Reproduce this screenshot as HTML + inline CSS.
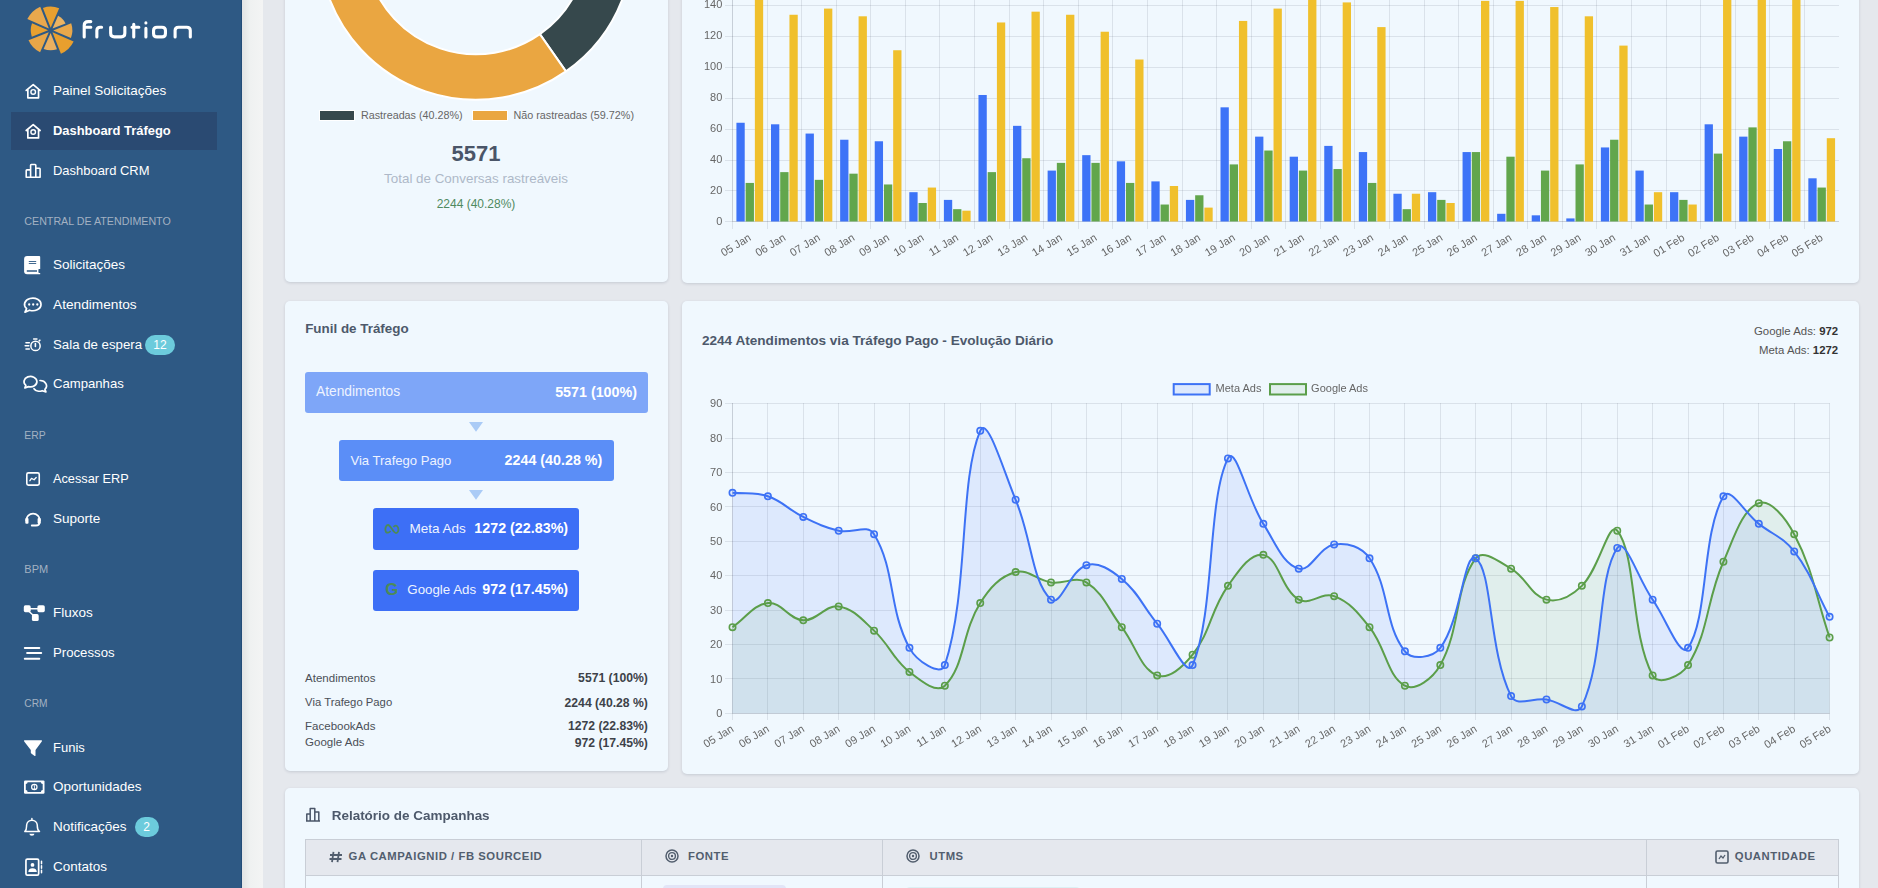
<!DOCTYPE html>
<html><head><meta charset="utf-8"><style>
html,body{margin:0;padding:0;width:1878px;height:888px;overflow:hidden;background:#e5e8ed;font-family:"Liberation Sans", sans-serif;}
</style></head><body>
<div style="position:absolute;left:0;top:0;width:242px;height:888px;background:#2e5984;"></div><div style="position:absolute;left:241px;top:0;width:1px;height:888px;background:#234c78;"></div><div style="position:absolute;left:242px;top:0;width:21px;height:888px;background:linear-gradient(90deg,#e2e4e5 0px,#e6e8e8 3px,#eff1f1 8px,#f3f4f4 20px);"></div><div style="position:absolute;left:11px;top:112px;width:206px;height:38px;background:#2a4a72;"></div><svg style="position:absolute;left:0;top:0" width="242" height="70"><path d="M50.70,27.75 L42.90,7.96 A23.7,23.7 0 0 1 59.17,8.25 Z" fill="#e8a030"/><path d="M52.53,28.54 L58.09,15.75 A16.4,16.4 0 0 1 65.51,23.43 Z" fill="#ebb362"/><path d="M53.26,30.41 L71.19,23.35 A21.7,21.7 0 0 1 70.93,38.09 Z" fill="#e9a84b"/><path d="M52.47,32.24 L73.62,41.44 A25.5,25.5 0 0 1 60.92,53.70 Z" fill="#e89f2e"/><path d="M50.60,32.97 L57.00,49.22 A19.9,19.9 0 0 1 43.64,48.99 Z" fill="#ebb060"/><path d="M48.77,32.18 L40.09,52.14 A24.2,24.2 0 0 1 28.52,40.15 Z" fill="#e8a648"/><path d="M48.04,30.31 L31.79,36.71 A19.9,19.9 0 0 1 32.02,23.35 Z" fill="#e8a030"/><path d="M48.83,28.48 L27.31,19.12 A25.9,25.9 0 0 1 40.23,6.65 Z" fill="#e9a84d"/><g fill="none" stroke="#fff" stroke-width="3.1" stroke-linecap="round" stroke-linejoin="round"><path d="M84.2,36.9 V25.6 Q84.2,21.6 88.2,21.6 H90.8 M84.2,27.2 H90.8"/><path d="M96.85,36.9 V30.6 Q96.85,27.2 100.2,27.2 H101.6"/><path d="M110.65,27.2 V33.3 Q110.65,36.9 114.3,36.9 H121.2 Q124.85,36.9 124.85,33.3 V27.2"/><path d="M133.75,24.2 V36.9 M132,27.2 H138.85"/><path d="M145.9,28.4 V36.9 M145.9,22.9 V23"/><path d="M157,27.2 H162 Q165.45,27.2 165.45,30.6 V33.5 Q165.45,36.9 162,36.9 H157 Q153.55,36.9 153.55,33.5 V30.6 Q153.55,27.2 157,27.2 Z"/><path d="M175.1,36.9 V30.6 Q175.1,27.2 178.6,27.2 H186.8 Q190.3,27.2 190.3,30.6 V36.9"/></g></svg><div style="position:absolute;left:53.00px;top:83.87px;font-size:13.5px;line-height:13.5px;color:#ffffff;font-weight:normal;white-space:nowrap;">Painel Solicitações</div><div style="position:absolute;left:53.00px;top:124.95px;font-size:12.93px;line-height:12.93px;color:#ffffff;font-weight:bold;white-space:nowrap;">Dashboard Tráfego</div><div style="position:absolute;left:53.00px;top:164.63px;font-size:12.96px;line-height:12.96px;color:#ffffff;font-weight:normal;white-space:nowrap;">Dashboard CRM</div><div style="position:absolute;left:53.00px;top:257.77px;font-size:13.5px;line-height:13.5px;color:#ffffff;font-weight:normal;white-space:nowrap;">Solicitações</div><div style="position:absolute;left:53.00px;top:297.80px;font-size:13.7px;line-height:13.7px;color:#ffffff;font-weight:normal;white-space:nowrap;">Atendimentos</div><div style="position:absolute;left:53.00px;top:338.28px;font-size:13.25px;line-height:13.25px;color:#ffffff;font-weight:normal;white-space:nowrap;">Sala de espera</div><div style="position:absolute;left:53.00px;top:376.99px;font-size:13.13px;line-height:13.13px;color:#ffffff;font-weight:normal;white-space:nowrap;">Campanhas</div><div style="position:absolute;left:53.00px;top:472.82px;font-size:12.74px;line-height:12.74px;color:#ffffff;font-weight:normal;white-space:nowrap;">Acessar ERP</div><div style="position:absolute;left:53.00px;top:511.77px;font-size:13.5px;line-height:13.5px;color:#ffffff;font-weight:normal;white-space:nowrap;">Suporte</div><div style="position:absolute;left:53.00px;top:606.17px;font-size:13.5px;line-height:13.5px;color:#ffffff;font-weight:normal;white-space:nowrap;">Fluxos</div><div style="position:absolute;left:53.00px;top:645.73px;font-size:13.2px;line-height:13.2px;color:#ffffff;font-weight:normal;white-space:nowrap;">Processos</div><div style="position:absolute;left:53.00px;top:741.20px;font-size:13.0px;line-height:13.0px;color:#ffffff;font-weight:normal;white-space:nowrap;">Funis</div><div style="position:absolute;left:53.00px;top:779.87px;font-size:13.5px;line-height:13.5px;color:#ffffff;font-weight:normal;white-space:nowrap;">Oportunidades</div><div style="position:absolute;left:53.00px;top:819.67px;font-size:13.5px;line-height:13.5px;color:#ffffff;font-weight:normal;white-space:nowrap;">Notificações</div><div style="position:absolute;left:53.00px;top:859.57px;font-size:13.5px;line-height:13.5px;color:#ffffff;font-weight:normal;white-space:nowrap;">Contatos</div><div style="position:absolute;left:24.30px;top:215.64px;font-size:10.7px;line-height:10.7px;color:#a3b1c2;font-weight:normal;white-space:nowrap;">CENTRAL DE ATENDIMENTO</div><div style="position:absolute;left:24.30px;top:430.60px;font-size:10.4px;line-height:10.4px;color:#a3b1c2;font-weight:normal;white-space:nowrap;">ERP</div><div style="position:absolute;left:24.30px;top:563.89px;font-size:11px;line-height:11px;color:#a3b1c2;font-weight:normal;white-space:nowrap;">BPM</div><div style="position:absolute;left:24.30px;top:699.07px;font-size:10.2px;line-height:10.2px;color:#a3b1c2;font-weight:normal;white-space:nowrap;">CRM</div><div style="position:absolute;left:145px;top:335px;width:30px;height:20px;border-radius:10.0px;background:#6ccbdc;color:#fff;font-size:12px;line-height:20px;text-align:center;">12</div><div style="position:absolute;left:134.5px;top:817px;width:24.0px;height:20px;border-radius:10.0px;background:#6ccbdc;color:#fff;font-size:12px;line-height:20px;text-align:center;">2</div><svg style="position:absolute;left:0;top:0" width="242" height="888"><g transform="translate(0,0)"><path d="M26.2,90.4 L33.2,84.6 L40.1,90.4 M27.85,89.2 V97.8 H38.55 V89.2" fill="none" stroke="#fff" stroke-linejoin="round" stroke-linecap="round" stroke-width="1.7"/><circle cx="33.2" cy="91.9" r="2.3" fill="none" stroke="#fff" stroke-linejoin="round" stroke-linecap="round" stroke-width="1.4"/></g><g transform="translate(0,40.1)"><path d="M26.2,90.4 L33.2,84.6 L40.1,90.4 M27.85,89.2 V97.8 H38.55 V89.2" fill="none" stroke="#fff" stroke-linejoin="round" stroke-linecap="round" stroke-width="1.7"/><circle cx="33.2" cy="91.9" r="2.3" fill="none" stroke="#fff" stroke-linejoin="round" stroke-linecap="round" stroke-width="1.4"/></g><path d="M26.2,177.2 V170.6 Q26.2,169.9 26.9,169.9 H30.6 V165.2 Q30.6,164.5 31.3,164.5 H35.1 Q35.8,164.5 35.8,165.2 V168.2 H39.4 Q40.1,168.2 40.1,168.9 V177.2 Z M30.6,169.9 V177.2 M35.8,168.2 V177.2" fill="none" stroke="#fff" stroke-linejoin="round" stroke-linecap="round" stroke-width="1.6"/><path d="M27.1,256.1 H39.2 Q40.2,256.1 40.2,257.1 V274.3 H27.1 Q24.1,274.3 24.1,271.3 V259.1 Q24.1,256.1 27.1,256.1 Z" fill="#fff"/><path d="M28.8,261.5 H36.2 M28.8,263.5 H36.2" stroke="#2e5984" stroke-width="0.9"/><path d="M26.8,271 H37 M38.6,269.8 H40.4 V272.1 H38.6" stroke="#2e5984" stroke-width="1.7" fill="#2e5984"/><path d="M26.6,308.6 A8.25,6.3 0 1 1 29.5,310.2 L25,312.2 Z" fill="none" stroke="#fff" stroke-linejoin="round" stroke-linecap="round" stroke-width="1.7"/><circle cx="29.2" cy="304.5" r="1.15" fill="#fff"/><circle cx="33.2" cy="304.5" r="1.15" fill="#fff"/><circle cx="37.3" cy="304.5" r="1.15" fill="#fff"/><circle cx="35.5" cy="345.9" r="4.65" fill="none" stroke="#fff" stroke-linejoin="round" stroke-linecap="round" stroke-width="1.5"/><path d="M33.7,339 H36.9 M39.2,340.9 L39.9,340.2 M35.4,343.6 V346.4 M26,342.7 H29.3 M25.2,345.8 H28.8 M26,349 H29.3" fill="none" stroke="#fff" stroke-linejoin="round" stroke-linecap="round" stroke-width="1.6"/><path d="M25.9,385.3 A6.45,5.2 0 1 1 28.6,386.6 L24.9,387.9 Z" fill="none" stroke="#fff" stroke-linejoin="round" stroke-linecap="round" stroke-width="1.7"/><path d="M40,380.5 A6.3,5.3 0 0 1 44.9,389.3 L45.9,391.9 L42.2,390.7 A6.3,5.3 0 0 1 34,388.7" fill="none" stroke="#fff" stroke-linejoin="round" stroke-linecap="round" stroke-width="1.7"/><rect x="26.8" y="472.9" width="12.45" height="12.2" rx="1.6" fill="none" stroke="#fff" stroke-linejoin="round" stroke-linecap="round" stroke-width="1.6"/><path d="M29.9,480.7 L31.5,478.4 L34.1,479.8 L36.2,477.5" fill="none" stroke="#fff" stroke-linejoin="round" stroke-linecap="round" stroke-width="1.3"/><path d="M26.2,520.5 A6.85,6.85 0 0 1 39.9,520.5" fill="none" stroke="#fff" stroke-linejoin="round" stroke-linecap="round" stroke-width="1.7"/><rect x="25.3" y="518" width="3.2" height="5.8" rx="1" fill="#fff"/><rect x="37.6" y="518" width="3.2" height="5.8" rx="1" fill="#fff"/><path d="M39.3,523 Q39.3,525.5 36,525.5 H31.8" fill="none" stroke="#fff" stroke-linejoin="round" stroke-linecap="round" stroke-width="1.9"/><rect x="23.8" y="605.3" width="6.9" height="6.9" rx="1.6" fill="#fff"/><rect x="37.4" y="605.3" width="7.4" height="6.9" rx="1.6" fill="#fff"/><rect x="31.9" y="614.1" width="6.8" height="6.9" rx="1.6" fill="#fff"/><path d="M30,608.7 H38 M28.5,611 L33.5,615.5" fill="none" stroke="#fff" stroke-linejoin="round" stroke-linecap="round" stroke-width="1.4"/><path d="M24.8,648 H39.3 M27.1,652.9 H41.2 M24.8,658.8 H39.3" fill="none" stroke="#fff" stroke-linejoin="round" stroke-linecap="round" stroke-width="2"/><path d="M24.6,740.3 H41.4 Q42.4,740.3 41.8,741.4 L35.5,750 V755.2 Q35.5,756.6 34.3,755.8 L31.3,753.6 Q30.8,753.2 30.8,752.6 V750 L24.2,741.4 Q23.6,740.3 24.6,740.3 Z" fill="#fff"/><rect x="24" y="780.4" width="20.5" height="13.3" rx="1.2" fill="#fff"/><path d="M27.6,782.2 H40.9 A1.8,1.8 0 0 0 42.7,784 V790.1 A1.8,1.8 0 0 0 40.9,791.9 H27.6 A1.8,1.8 0 0 0 25.8,790.1 V784 A1.8,1.8 0 0 0 27.6,782.2 Z" fill="#2e5984"/><circle cx="34.3" cy="787" r="3.3" fill="#fff"/><circle cx="34.3" cy="787" r="2.1" fill="#2e5984"/><path d="M33.6,785.9 L34.5,785.4 V788.5 M33.6,788.5 H35.3" fill="none" stroke="#fff" stroke-width="0.8"/><path d="M31.9,818.6 V819.8 M24.8,831.6 H39.5 Q37.3,830 37.3,826 V825 A5.4,5.6 0 0 0 26.6,825 V826 Q26.6,830 24.8,831.6 Z" fill="none" stroke="#fff" stroke-linejoin="round" stroke-linecap="round" stroke-width="1.5"/><path d="M29.4,833.8 H34.4 A2.5,2 0 0 1 29.4,833.8 Z" fill="#fff"/><rect x="25.95" y="859.05" width="12.7" height="16.1" rx="1.4" fill="none" stroke="#fff" stroke-linejoin="round" stroke-linecap="round" stroke-width="1.7"/><path d="M41.5,861.2 V863.8 M41.5,865.7 V868.3 M41.5,870.2 V872.8" fill="none" stroke="#fff" stroke-linejoin="round" stroke-linecap="round" stroke-width="1.5"/><circle cx="32.5" cy="864.9" r="1.9" fill="#fff"/><path d="M28.3,872 Q28.3,868.2 32.5,868.2 Q36.8,868.2 36.8,872 Z" fill="#fff"/></svg><div style="position:absolute;left:285px;top:-200px;width:383px;height:482px;background:#f0f8fe;border-radius:5px;box-shadow:0 1px 3px rgba(20,35,70,0.15);"></div><div style="position:absolute;left:682px;top:-200px;width:1177px;height:483px;background:#f0f8fe;border-radius:5px;box-shadow:0 1px 3px rgba(20,35,70,0.15);"></div><div style="position:absolute;left:285px;top:301px;width:383px;height:470px;background:#f0f8fe;border-radius:5px;box-shadow:0 1px 3px rgba(20,35,70,0.15);"></div><div style="position:absolute;left:682px;top:301px;width:1177px;height:473px;background:#f0f8fe;border-radius:5px;box-shadow:0 1px 3px rgba(20,35,70,0.15);"></div><div style="position:absolute;left:285px;top:788px;width:1574px;height:312px;background:#f0f8fe;border-radius:5px;box-shadow:0 1px 3px rgba(20,35,70,0.15);"></div><svg style="position:absolute;left:285px;top:0" width="383" height="130"><g transform="translate(-285,0)"><path d="M476.00,-213.90 A156.8,156.8 0 0 1 565.92,71.36 L539.88,34.16 A111.4,111.4 0 0 0 476.00,-168.50 Z" fill="#36484c" stroke="#fff" stroke-width="2"/><path d="M565.92,71.36 A156.8,156.8 0 1 1 476.00,-213.90 L476.00,-168.50 A111.4,111.4 0 1 0 539.88,34.16 Z" fill="#eaa641" stroke="#fff" stroke-width="2"/></g></svg><div style="position:absolute;left:320px;top:111px;width:34.4px;height:9.4px;background:#36484c;box-shadow:0 0 0 1px #fff"></div><div style="position:absolute;left:472.6px;top:111px;width:34.4px;height:9.4px;background:#eaa641;box-shadow:0 0 0 1px #fff"></div><div style="position:absolute;left:361.00px;top:109.90px;font-size:10.75px;line-height:10.75px;color:#666;font-weight:normal;white-space:nowrap;">Rastreadas (40.28%)</div><div style="position:absolute;left:513.40px;top:109.86px;font-size:10.8px;line-height:10.8px;color:#666;font-weight:normal;white-space:nowrap;">Não rastreadas (59.72%)</div><div style="position:absolute;left:176.00px;width:600px;text-align:center;top:142.88px;font-size:22px;line-height:22px;color:#4a5568;font-weight:bold;white-space:nowrap;">5571</div><div style="position:absolute;left:176.00px;width:600px;text-align:center;top:171.66px;font-size:13.4px;line-height:13.4px;color:#aeb8c8;font-weight:normal;white-space:nowrap;">Total de Conversas rastreáveis</div><div style="position:absolute;left:176.00px;width:600px;text-align:center;top:197.84px;font-size:12px;line-height:12px;color:#4f8a5f;font-weight:normal;white-space:nowrap;">2244 (40.28%)</div><svg style="position:absolute;left:0;top:0;overflow:visible;will-change:transform" width="1878" height="290" font-family="Liberation Sans"><line x1="725" y1="221.5" x2="1839" y2="221.5" stroke="rgba(0,10,30,0.09)" stroke-width="1"/><line x1="725" y1="190.5" x2="1839" y2="190.5" stroke="rgba(0,10,30,0.09)" stroke-width="1"/><line x1="725" y1="160.5" x2="1839" y2="160.5" stroke="rgba(0,10,30,0.09)" stroke-width="1"/><line x1="725" y1="129.5" x2="1839" y2="129.5" stroke="rgba(0,10,30,0.09)" stroke-width="1"/><line x1="725" y1="98.5" x2="1839" y2="98.5" stroke="rgba(0,10,30,0.09)" stroke-width="1"/><line x1="725" y1="67.5" x2="1839" y2="67.5" stroke="rgba(0,10,30,0.09)" stroke-width="1"/><line x1="725" y1="36.5" x2="1839" y2="36.5" stroke="rgba(0,10,30,0.09)" stroke-width="1"/><line x1="725" y1="5.5" x2="1839" y2="5.5" stroke="rgba(0,10,30,0.09)" stroke-width="1"/><line x1="732.5" y1="-10" x2="732.5" y2="229" stroke="rgba(0,10,30,0.09)" stroke-width="1"/><line x1="767.5" y1="-10" x2="767.5" y2="229" stroke="rgba(0,10,30,0.09)" stroke-width="1"/><line x1="801.5" y1="-10" x2="801.5" y2="229" stroke="rgba(0,10,30,0.09)" stroke-width="1"/><line x1="836.5" y1="-10" x2="836.5" y2="229" stroke="rgba(0,10,30,0.09)" stroke-width="1"/><line x1="870.5" y1="-10" x2="870.5" y2="229" stroke="rgba(0,10,30,0.09)" stroke-width="1"/><line x1="905.5" y1="-10" x2="905.5" y2="229" stroke="rgba(0,10,30,0.09)" stroke-width="1"/><line x1="939.5" y1="-10" x2="939.5" y2="229" stroke="rgba(0,10,30,0.09)" stroke-width="1"/><line x1="974.5" y1="-10" x2="974.5" y2="229" stroke="rgba(0,10,30,0.09)" stroke-width="1"/><line x1="1009.5" y1="-10" x2="1009.5" y2="229" stroke="rgba(0,10,30,0.09)" stroke-width="1"/><line x1="1043.5" y1="-10" x2="1043.5" y2="229" stroke="rgba(0,10,30,0.09)" stroke-width="1"/><line x1="1078.5" y1="-10" x2="1078.5" y2="229" stroke="rgba(0,10,30,0.09)" stroke-width="1"/><line x1="1112.5" y1="-10" x2="1112.5" y2="229" stroke="rgba(0,10,30,0.09)" stroke-width="1"/><line x1="1147.5" y1="-10" x2="1147.5" y2="229" stroke="rgba(0,10,30,0.09)" stroke-width="1"/><line x1="1182.5" y1="-10" x2="1182.5" y2="229" stroke="rgba(0,10,30,0.09)" stroke-width="1"/><line x1="1216.5" y1="-10" x2="1216.5" y2="229" stroke="rgba(0,10,30,0.09)" stroke-width="1"/><line x1="1251.5" y1="-10" x2="1251.5" y2="229" stroke="rgba(0,10,30,0.09)" stroke-width="1"/><line x1="1285.5" y1="-10" x2="1285.5" y2="229" stroke="rgba(0,10,30,0.09)" stroke-width="1"/><line x1="1320.5" y1="-10" x2="1320.5" y2="229" stroke="rgba(0,10,30,0.09)" stroke-width="1"/><line x1="1354.5" y1="-10" x2="1354.5" y2="229" stroke="rgba(0,10,30,0.09)" stroke-width="1"/><line x1="1389.5" y1="-10" x2="1389.5" y2="229" stroke="rgba(0,10,30,0.09)" stroke-width="1"/><line x1="1424.5" y1="-10" x2="1424.5" y2="229" stroke="rgba(0,10,30,0.09)" stroke-width="1"/><line x1="1458.5" y1="-10" x2="1458.5" y2="229" stroke="rgba(0,10,30,0.09)" stroke-width="1"/><line x1="1493.5" y1="-10" x2="1493.5" y2="229" stroke="rgba(0,10,30,0.09)" stroke-width="1"/><line x1="1527.5" y1="-10" x2="1527.5" y2="229" stroke="rgba(0,10,30,0.09)" stroke-width="1"/><line x1="1562.5" y1="-10" x2="1562.5" y2="229" stroke="rgba(0,10,30,0.09)" stroke-width="1"/><line x1="1596.5" y1="-10" x2="1596.5" y2="229" stroke="rgba(0,10,30,0.09)" stroke-width="1"/><line x1="1631.5" y1="-10" x2="1631.5" y2="229" stroke="rgba(0,10,30,0.09)" stroke-width="1"/><line x1="1666.5" y1="-10" x2="1666.5" y2="229" stroke="rgba(0,10,30,0.09)" stroke-width="1"/><line x1="1700.5" y1="-10" x2="1700.5" y2="229" stroke="rgba(0,10,30,0.09)" stroke-width="1"/><line x1="1735.5" y1="-10" x2="1735.5" y2="229" stroke="rgba(0,10,30,0.09)" stroke-width="1"/><line x1="1769.5" y1="-10" x2="1769.5" y2="229" stroke="rgba(0,10,30,0.09)" stroke-width="1"/><line x1="1804.5" y1="-10" x2="1804.5" y2="229" stroke="rgba(0,10,30,0.09)" stroke-width="1"/><line x1="732.5" y1="-10" x2="732.5" y2="221.5" stroke="rgba(0,10,30,0.09)"/><line x1="732.5" y1="221.5" x2="1839" y2="221.5" stroke="rgba(0,10,30,0.09)"/><rect x="736.42" y="122.76" width="8.30" height="98.74" fill="#3d73f7"/><rect x="745.64" y="182.93" width="8.30" height="38.57" fill="#62a64c"/><rect x="754.86" y="-25.36" width="8.30" height="246.86" fill="#f0c02c"/><rect x="771.00" y="124.30" width="8.30" height="97.20" fill="#3d73f7"/><rect x="780.22" y="172.13" width="8.30" height="49.37" fill="#62a64c"/><rect x="789.44" y="14.76" width="8.30" height="206.74" fill="#f0c02c"/><rect x="805.58" y="133.56" width="8.30" height="87.94" fill="#3d73f7"/><rect x="814.80" y="179.84" width="8.30" height="41.66" fill="#62a64c"/><rect x="824.02" y="8.59" width="8.30" height="212.91" fill="#f0c02c"/><rect x="840.15" y="139.73" width="8.30" height="81.77" fill="#3d73f7"/><rect x="849.37" y="173.67" width="8.30" height="47.83" fill="#62a64c"/><rect x="858.59" y="16.30" width="8.30" height="205.20" fill="#f0c02c"/><rect x="874.73" y="141.27" width="8.30" height="80.23" fill="#3d73f7"/><rect x="883.95" y="184.47" width="8.30" height="37.03" fill="#62a64c"/><rect x="893.17" y="50.24" width="8.30" height="171.26" fill="#f0c02c"/><rect x="909.31" y="192.19" width="8.30" height="29.31" fill="#3d73f7"/><rect x="918.53" y="202.99" width="8.30" height="18.51" fill="#62a64c"/><rect x="927.75" y="187.56" width="8.30" height="33.94" fill="#f0c02c"/><rect x="943.89" y="199.90" width="8.30" height="21.60" fill="#3d73f7"/><rect x="953.11" y="209.16" width="8.30" height="12.34" fill="#62a64c"/><rect x="962.33" y="210.70" width="8.30" height="10.80" fill="#f0c02c"/><rect x="978.47" y="94.99" width="8.30" height="126.51" fill="#3d73f7"/><rect x="987.69" y="172.13" width="8.30" height="49.37" fill="#62a64c"/><rect x="996.91" y="22.47" width="8.30" height="199.03" fill="#f0c02c"/><rect x="1013.04" y="125.84" width="8.30" height="95.66" fill="#3d73f7"/><rect x="1022.26" y="158.24" width="8.30" height="63.26" fill="#62a64c"/><rect x="1031.49" y="11.67" width="8.30" height="209.83" fill="#f0c02c"/><rect x="1047.62" y="170.59" width="8.30" height="50.91" fill="#3d73f7"/><rect x="1056.84" y="162.87" width="8.30" height="58.63" fill="#62a64c"/><rect x="1066.06" y="14.76" width="8.30" height="206.74" fill="#f0c02c"/><rect x="1082.20" y="155.16" width="8.30" height="66.34" fill="#3d73f7"/><rect x="1091.42" y="162.87" width="8.30" height="58.63" fill="#62a64c"/><rect x="1100.64" y="31.73" width="8.30" height="189.77" fill="#f0c02c"/><rect x="1116.78" y="161.33" width="8.30" height="60.17" fill="#3d73f7"/><rect x="1126.00" y="182.93" width="8.30" height="38.57" fill="#62a64c"/><rect x="1135.22" y="59.50" width="8.30" height="162.00" fill="#f0c02c"/><rect x="1151.36" y="181.39" width="8.30" height="40.11" fill="#3d73f7"/><rect x="1160.58" y="204.53" width="8.30" height="16.97" fill="#62a64c"/><rect x="1169.80" y="186.01" width="8.30" height="35.49" fill="#f0c02c"/><rect x="1185.93" y="199.90" width="8.30" height="21.60" fill="#3d73f7"/><rect x="1195.16" y="195.27" width="8.30" height="26.23" fill="#62a64c"/><rect x="1204.38" y="207.61" width="8.30" height="13.89" fill="#f0c02c"/><rect x="1220.51" y="107.33" width="8.30" height="114.17" fill="#3d73f7"/><rect x="1229.73" y="164.41" width="8.30" height="57.09" fill="#62a64c"/><rect x="1238.95" y="20.93" width="8.30" height="200.57" fill="#f0c02c"/><rect x="1255.09" y="136.64" width="8.30" height="84.86" fill="#3d73f7"/><rect x="1264.31" y="150.53" width="8.30" height="70.97" fill="#62a64c"/><rect x="1273.53" y="8.59" width="8.30" height="212.91" fill="#f0c02c"/><rect x="1289.67" y="156.70" width="8.30" height="64.80" fill="#3d73f7"/><rect x="1298.89" y="170.59" width="8.30" height="50.91" fill="#62a64c"/><rect x="1308.11" y="-25.36" width="8.30" height="246.86" fill="#f0c02c"/><rect x="1324.25" y="145.90" width="8.30" height="75.60" fill="#3d73f7"/><rect x="1333.47" y="169.04" width="8.30" height="52.46" fill="#62a64c"/><rect x="1342.69" y="2.41" width="8.30" height="219.09" fill="#f0c02c"/><rect x="1358.83" y="152.07" width="8.30" height="69.43" fill="#3d73f7"/><rect x="1368.05" y="182.93" width="8.30" height="38.57" fill="#62a64c"/><rect x="1377.27" y="27.10" width="8.30" height="194.40" fill="#f0c02c"/><rect x="1393.40" y="193.73" width="8.30" height="27.77" fill="#3d73f7"/><rect x="1402.62" y="209.16" width="8.30" height="12.34" fill="#62a64c"/><rect x="1411.84" y="193.73" width="8.30" height="27.77" fill="#f0c02c"/><rect x="1427.98" y="192.19" width="8.30" height="29.31" fill="#3d73f7"/><rect x="1437.20" y="199.90" width="8.30" height="21.60" fill="#62a64c"/><rect x="1446.42" y="202.99" width="8.30" height="18.51" fill="#f0c02c"/><rect x="1462.56" y="152.07" width="8.30" height="69.43" fill="#3d73f7"/><rect x="1471.78" y="152.07" width="8.30" height="69.43" fill="#62a64c"/><rect x="1481.00" y="0.87" width="8.30" height="220.63" fill="#f0c02c"/><rect x="1497.14" y="213.79" width="8.30" height="7.71" fill="#3d73f7"/><rect x="1506.36" y="156.70" width="8.30" height="64.80" fill="#62a64c"/><rect x="1515.58" y="0.87" width="8.30" height="220.63" fill="#f0c02c"/><rect x="1531.72" y="215.33" width="8.30" height="6.17" fill="#3d73f7"/><rect x="1540.94" y="170.59" width="8.30" height="50.91" fill="#62a64c"/><rect x="1550.16" y="7.04" width="8.30" height="214.46" fill="#f0c02c"/><rect x="1566.29" y="218.41" width="8.30" height="3.09" fill="#3d73f7"/><rect x="1575.51" y="164.41" width="8.30" height="57.09" fill="#62a64c"/><rect x="1584.74" y="16.30" width="8.30" height="205.20" fill="#f0c02c"/><rect x="1600.87" y="147.44" width="8.30" height="74.06" fill="#3d73f7"/><rect x="1610.09" y="139.73" width="8.30" height="81.77" fill="#62a64c"/><rect x="1619.31" y="45.61" width="8.30" height="175.89" fill="#f0c02c"/><rect x="1635.45" y="170.59" width="8.30" height="50.91" fill="#3d73f7"/><rect x="1644.67" y="204.53" width="8.30" height="16.97" fill="#62a64c"/><rect x="1653.89" y="192.19" width="8.30" height="29.31" fill="#f0c02c"/><rect x="1670.03" y="192.19" width="8.30" height="29.31" fill="#3d73f7"/><rect x="1679.25" y="199.90" width="8.30" height="21.60" fill="#62a64c"/><rect x="1688.47" y="204.53" width="8.30" height="16.97" fill="#f0c02c"/><rect x="1704.61" y="124.30" width="8.30" height="97.20" fill="#3d73f7"/><rect x="1713.83" y="153.61" width="8.30" height="67.89" fill="#62a64c"/><rect x="1723.05" y="-25.36" width="8.30" height="246.86" fill="#f0c02c"/><rect x="1739.18" y="136.64" width="8.30" height="84.86" fill="#3d73f7"/><rect x="1748.41" y="127.39" width="8.30" height="94.11" fill="#62a64c"/><rect x="1757.63" y="-25.36" width="8.30" height="246.86" fill="#f0c02c"/><rect x="1773.76" y="148.99" width="8.30" height="72.51" fill="#3d73f7"/><rect x="1782.98" y="141.27" width="8.30" height="80.23" fill="#62a64c"/><rect x="1792.20" y="-25.36" width="8.30" height="246.86" fill="#f0c02c"/><rect x="1808.34" y="178.30" width="8.30" height="43.20" fill="#3d73f7"/><rect x="1817.56" y="187.56" width="8.30" height="33.94" fill="#62a64c"/><rect x="1826.78" y="138.19" width="8.30" height="83.31" fill="#f0c02c"/><text x="722.3" y="224.80" text-anchor="end" font-size="11" fill="#666">0</text><text x="722.3" y="193.82" text-anchor="end" font-size="11" fill="#666">20</text><text x="722.3" y="162.84" text-anchor="end" font-size="11" fill="#666">40</text><text x="722.3" y="131.86" text-anchor="end" font-size="11" fill="#666">60</text><text x="722.3" y="100.88" text-anchor="end" font-size="11" fill="#666">80</text><text x="722.3" y="69.90" text-anchor="end" font-size="11" fill="#666">100</text><text x="722.3" y="38.92" text-anchor="end" font-size="11" fill="#666">120</text><text x="722.3" y="7.94" text-anchor="end" font-size="11" fill="#666">140</text><text transform="translate(747.8,233) rotate(-31.5)" text-anchor="end" font-size="11" fill="#666" dy="0.7em">05 Jan</text><text transform="translate(782.4,233) rotate(-31.5)" text-anchor="end" font-size="11" fill="#666" dy="0.7em">06 Jan</text><text transform="translate(816.9,233) rotate(-31.5)" text-anchor="end" font-size="11" fill="#666" dy="0.7em">07 Jan</text><text transform="translate(851.5,233) rotate(-31.5)" text-anchor="end" font-size="11" fill="#666" dy="0.7em">08 Jan</text><text transform="translate(886.1,233) rotate(-31.5)" text-anchor="end" font-size="11" fill="#666" dy="0.7em">09 Jan</text><text transform="translate(920.7,233) rotate(-31.5)" text-anchor="end" font-size="11" fill="#666" dy="0.7em">10 Jan</text><text transform="translate(955.3,233) rotate(-31.5)" text-anchor="end" font-size="11" fill="#666" dy="0.7em">11 Jan</text><text transform="translate(989.8,233) rotate(-31.5)" text-anchor="end" font-size="11" fill="#666" dy="0.7em">12 Jan</text><text transform="translate(1024.4,233) rotate(-31.5)" text-anchor="end" font-size="11" fill="#666" dy="0.7em">13 Jan</text><text transform="translate(1059.0,233) rotate(-31.5)" text-anchor="end" font-size="11" fill="#666" dy="0.7em">14 Jan</text><text transform="translate(1093.6,233) rotate(-31.5)" text-anchor="end" font-size="11" fill="#666" dy="0.7em">15 Jan</text><text transform="translate(1128.1,233) rotate(-31.5)" text-anchor="end" font-size="11" fill="#666" dy="0.7em">16 Jan</text><text transform="translate(1162.7,233) rotate(-31.5)" text-anchor="end" font-size="11" fill="#666" dy="0.7em">17 Jan</text><text transform="translate(1197.3,233) rotate(-31.5)" text-anchor="end" font-size="11" fill="#666" dy="0.7em">18 Jan</text><text transform="translate(1231.9,233) rotate(-31.5)" text-anchor="end" font-size="11" fill="#666" dy="0.7em">19 Jan</text><text transform="translate(1266.5,233) rotate(-31.5)" text-anchor="end" font-size="11" fill="#666" dy="0.7em">20 Jan</text><text transform="translate(1301.0,233) rotate(-31.5)" text-anchor="end" font-size="11" fill="#666" dy="0.7em">21 Jan</text><text transform="translate(1335.6,233) rotate(-31.5)" text-anchor="end" font-size="11" fill="#666" dy="0.7em">22 Jan</text><text transform="translate(1370.2,233) rotate(-31.5)" text-anchor="end" font-size="11" fill="#666" dy="0.7em">23 Jan</text><text transform="translate(1404.8,233) rotate(-31.5)" text-anchor="end" font-size="11" fill="#666" dy="0.7em">24 Jan</text><text transform="translate(1439.4,233) rotate(-31.5)" text-anchor="end" font-size="11" fill="#666" dy="0.7em">25 Jan</text><text transform="translate(1473.9,233) rotate(-31.5)" text-anchor="end" font-size="11" fill="#666" dy="0.7em">26 Jan</text><text transform="translate(1508.5,233) rotate(-31.5)" text-anchor="end" font-size="11" fill="#666" dy="0.7em">27 Jan</text><text transform="translate(1543.1,233) rotate(-31.5)" text-anchor="end" font-size="11" fill="#666" dy="0.7em">28 Jan</text><text transform="translate(1577.7,233) rotate(-31.5)" text-anchor="end" font-size="11" fill="#666" dy="0.7em">29 Jan</text><text transform="translate(1612.2,233) rotate(-31.5)" text-anchor="end" font-size="11" fill="#666" dy="0.7em">30 Jan</text><text transform="translate(1646.8,233) rotate(-31.5)" text-anchor="end" font-size="11" fill="#666" dy="0.7em">31 Jan</text><text transform="translate(1681.4,233) rotate(-31.5)" text-anchor="end" font-size="11" fill="#666" dy="0.7em">01 Feb</text><text transform="translate(1716.0,233) rotate(-31.5)" text-anchor="end" font-size="11" fill="#666" dy="0.7em">02 Feb</text><text transform="translate(1750.6,233) rotate(-31.5)" text-anchor="end" font-size="11" fill="#666" dy="0.7em">03 Feb</text><text transform="translate(1785.1,233) rotate(-31.5)" text-anchor="end" font-size="11" fill="#666" dy="0.7em">04 Feb</text><text transform="translate(1819.7,233) rotate(-31.5)" text-anchor="end" font-size="11" fill="#666" dy="0.7em">05 Feb</text></svg><div style="position:absolute;left:305.20px;top:321.66px;font-size:13.4px;line-height:13.4px;color:#4d596b;font-weight:bold;white-space:nowrap;">Funil de Tráfego</div><div style="position:absolute;left:305px;top:372px;width:343px;height:41px;background:#7ea6f8;border-radius:3px;"></div><div style="position:absolute;left:339px;top:440px;width:275px;height:41px;background:#5b8ef7;border-radius:3px;"></div><div style="position:absolute;left:373px;top:508px;width:206px;height:42px;background:#3d6ff6;border-radius:3px;"></div><div style="position:absolute;left:373px;top:570px;width:206px;height:41px;background:#3d6ff6;border-radius:3px;"></div><svg style="position:absolute;left:469px;top:422px" width="14" height="10"><path d="M0,0 H14 L7,9.7 Z" fill="#aacbf6"/></svg><svg style="position:absolute;left:469px;top:490px" width="14" height="10"><path d="M0,0 H14 L7,9.7 Z" fill="#aacbf6"/></svg><div style="position:absolute;left:316.00px;top:385.36px;font-size:13.75px;line-height:13.75px;color:#eef3ff;font-weight:normal;white-space:nowrap;">Atendimentos</div><div style="position:absolute;right:1241.00px;top:384.90px;font-size:14.3px;line-height:14.3px;color:#ffffff;font-weight:bold;white-space:nowrap;">5571 (100%)</div><div style="position:absolute;left:350.40px;top:453.91px;font-size:13.1px;line-height:13.1px;color:#eef3ff;font-weight:normal;white-space:nowrap;">Via Trafego Pago</div><div style="position:absolute;right:1275.70px;top:452.90px;font-size:14.3px;line-height:14.3px;color:#ffffff;font-weight:bold;white-space:nowrap;">2244 (40.28 %)</div><div style="position:absolute;left:409.50px;top:521.57px;font-size:13.5px;line-height:13.5px;color:#eef3ff;font-weight:normal;white-space:nowrap;">Meta Ads</div><div style="position:absolute;right:1309.90px;top:520.90px;font-size:14.3px;line-height:14.3px;color:#ffffff;font-weight:bold;white-space:nowrap;">1272 (22.83%)</div><div style="position:absolute;left:407.30px;top:583.24px;font-size:13.3px;line-height:13.3px;color:#eef3ff;font-weight:normal;white-space:nowrap;">Google Ads</div><div style="position:absolute;right:1309.90px;top:582.40px;font-size:14.3px;line-height:14.3px;color:#ffffff;font-weight:bold;white-space:nowrap;">972 (17.45%)</div><svg style="position:absolute;left:384px;top:523px" width="16" height="12"><path d="M2,9 C0.5,6 2,2 4,2 C6.5,2 9.5,10 12,10 C14,10 15,7 14,4.5 C13,2 11,2 9.5,4 M6.5,8 C5,10 3,10 2,9" fill="none" stroke="#4c8a58" stroke-width="1.8"/></svg><div style="position:absolute;left:385.3px;top:581.9px;font-size:16.8px;line-height:16px;font-weight:bold;color:#4c8a58;">G</div><div style="position:absolute;left:305.10px;top:672.97px;font-size:11.5px;line-height:11.5px;color:#4a4f57;font-weight:normal;white-space:nowrap;">Atendimentos</div><div style="position:absolute;right:1230.10px;top:672.37px;font-size:12.2px;line-height:12.2px;color:#3d4249;font-weight:bold;white-space:nowrap;">5571 (100%)</div><div style="position:absolute;left:305.10px;top:697.33px;font-size:11.3px;line-height:11.3px;color:#4a4f57;font-weight:normal;white-space:nowrap;">Via Trafego Pago</div><div style="position:absolute;right:1230.10px;top:696.57px;font-size:12.2px;line-height:12.2px;color:#3d4249;font-weight:bold;white-space:nowrap;">2244 (40.28 %)</div><div style="position:absolute;left:305.10px;top:720.77px;font-size:11.5px;line-height:11.5px;color:#4a4f57;font-weight:normal;white-space:nowrap;">FacebookAds</div><div style="position:absolute;right:1230.10px;top:720.17px;font-size:12.2px;line-height:12.2px;color:#3d4249;font-weight:bold;white-space:nowrap;">1272 (22.83%)</div><div style="position:absolute;left:305.10px;top:737.17px;font-size:11.5px;line-height:11.5px;color:#4a4f57;font-weight:normal;white-space:nowrap;">Google Ads</div><div style="position:absolute;right:1230.10px;top:736.57px;font-size:12.2px;line-height:12.2px;color:#3d4249;font-weight:bold;white-space:nowrap;">972 (17.45%)</div><div style="position:absolute;left:701.90px;top:333.79px;font-size:13.6px;line-height:13.6px;color:#4d596b;font-weight:bold;white-space:nowrap;">2244 Atendimentos via Tráfego Pago - Evolução Diário</div><div style="position:absolute;right:39.80px;top:325.55px;font-size:11.4px;line-height:11.4px;color:#555;font-weight:normal;white-space:nowrap;">Google Ads: <b style="color:#333">972</b></div><div style="position:absolute;right:39.80px;top:345.45px;font-size:11.4px;line-height:11.4px;color:#555;font-weight:normal;white-space:nowrap;">Meta Ads: <b style="color:#333">1272</b></div><svg style="position:absolute;left:0;top:0;overflow:visible;will-change:transform" width="1878" height="888" font-family="Liberation Sans"><line x1="725" y1="713.5" x2="1829.6" y2="713.5" stroke="rgba(0,10,30,0.09)"/><line x1="725" y1="678.5" x2="1829.6" y2="678.5" stroke="rgba(0,10,30,0.09)"/><line x1="725" y1="644.5" x2="1829.6" y2="644.5" stroke="rgba(0,10,30,0.09)"/><line x1="725" y1="610.5" x2="1829.6" y2="610.5" stroke="rgba(0,10,30,0.09)"/><line x1="725" y1="575.5" x2="1829.6" y2="575.5" stroke="rgba(0,10,30,0.09)"/><line x1="725" y1="541.5" x2="1829.6" y2="541.5" stroke="rgba(0,10,30,0.09)"/><line x1="725" y1="506.5" x2="1829.6" y2="506.5" stroke="rgba(0,10,30,0.09)"/><line x1="725" y1="472.5" x2="1829.6" y2="472.5" stroke="rgba(0,10,30,0.09)"/><line x1="725" y1="438.5" x2="1829.6" y2="438.5" stroke="rgba(0,10,30,0.09)"/><line x1="725" y1="403.5" x2="1829.6" y2="403.5" stroke="rgba(0,10,30,0.09)"/><line x1="732.5" y1="403" x2="732.5" y2="720" stroke="rgba(0,10,30,0.09)"/><line x1="767.5" y1="403" x2="767.5" y2="720" stroke="rgba(0,10,30,0.09)"/><line x1="803.5" y1="403" x2="803.5" y2="720" stroke="rgba(0,10,30,0.09)"/><line x1="838.5" y1="403" x2="838.5" y2="720" stroke="rgba(0,10,30,0.09)"/><line x1="874.5" y1="403" x2="874.5" y2="720" stroke="rgba(0,10,30,0.09)"/><line x1="909.5" y1="403" x2="909.5" y2="720" stroke="rgba(0,10,30,0.09)"/><line x1="944.5" y1="403" x2="944.5" y2="720" stroke="rgba(0,10,30,0.09)"/><line x1="980.5" y1="403" x2="980.5" y2="720" stroke="rgba(0,10,30,0.09)"/><line x1="1015.5" y1="403" x2="1015.5" y2="720" stroke="rgba(0,10,30,0.09)"/><line x1="1051.5" y1="403" x2="1051.5" y2="720" stroke="rgba(0,10,30,0.09)"/><line x1="1086.5" y1="403" x2="1086.5" y2="720" stroke="rgba(0,10,30,0.09)"/><line x1="1121.5" y1="403" x2="1121.5" y2="720" stroke="rgba(0,10,30,0.09)"/><line x1="1157.5" y1="403" x2="1157.5" y2="720" stroke="rgba(0,10,30,0.09)"/><line x1="1192.5" y1="403" x2="1192.5" y2="720" stroke="rgba(0,10,30,0.09)"/><line x1="1227.5" y1="403" x2="1227.5" y2="720" stroke="rgba(0,10,30,0.09)"/><line x1="1263.5" y1="403" x2="1263.5" y2="720" stroke="rgba(0,10,30,0.09)"/><line x1="1298.5" y1="403" x2="1298.5" y2="720" stroke="rgba(0,10,30,0.09)"/><line x1="1334.5" y1="403" x2="1334.5" y2="720" stroke="rgba(0,10,30,0.09)"/><line x1="1369.5" y1="403" x2="1369.5" y2="720" stroke="rgba(0,10,30,0.09)"/><line x1="1404.5" y1="403" x2="1404.5" y2="720" stroke="rgba(0,10,30,0.09)"/><line x1="1440.5" y1="403" x2="1440.5" y2="720" stroke="rgba(0,10,30,0.09)"/><line x1="1475.5" y1="403" x2="1475.5" y2="720" stroke="rgba(0,10,30,0.09)"/><line x1="1511.5" y1="403" x2="1511.5" y2="720" stroke="rgba(0,10,30,0.09)"/><line x1="1546.5" y1="403" x2="1546.5" y2="720" stroke="rgba(0,10,30,0.09)"/><line x1="1581.5" y1="403" x2="1581.5" y2="720" stroke="rgba(0,10,30,0.09)"/><line x1="1617.5" y1="403" x2="1617.5" y2="720" stroke="rgba(0,10,30,0.09)"/><line x1="1652.5" y1="403" x2="1652.5" y2="720" stroke="rgba(0,10,30,0.09)"/><line x1="1688.5" y1="403" x2="1688.5" y2="720" stroke="rgba(0,10,30,0.09)"/><line x1="1723.5" y1="403" x2="1723.5" y2="720" stroke="rgba(0,10,30,0.09)"/><line x1="1758.5" y1="403" x2="1758.5" y2="720" stroke="rgba(0,10,30,0.09)"/><line x1="1794.5" y1="403" x2="1794.5" y2="720" stroke="rgba(0,10,30,0.09)"/><line x1="1829.5" y1="403" x2="1829.5" y2="720" stroke="rgba(0,10,30,0.09)"/><line x1="732.5" y1="403" x2="732.5" y2="713.5" stroke="rgba(0,10,30,0.09)"/><line x1="732.5" y1="713.5" x2="1829.6" y2="713.5" stroke="rgba(0,10,30,0.09)"/><path d="M732.50,627.19 C746.66,617.54 753.14,604.51 767.89,603.08 C781.45,601.76 788.87,619.60 803.28,620.30 C817.18,620.98 825.36,604.58 838.67,606.52 C853.67,608.71 861.59,619.10 874.06,630.63 C889.90,645.28 892.78,658.98 909.45,671.97 C921.09,681.03 936.43,693.93 944.84,685.74 C964.75,666.37 961.64,632.93 980.23,603.08 C989.95,587.46 999.75,576.71 1015.62,572.08 C1028.06,568.45 1036.56,580.30 1051.01,582.41 C1064.88,584.44 1075.56,575.56 1086.40,582.41 C1103.88,593.47 1107.97,609.02 1121.79,627.19 C1136.28,646.22 1140.38,668.87 1157.18,675.41 C1168.69,679.89 1182.77,667.14 1192.57,654.74 C1211.08,631.32 1210.35,610.71 1227.96,585.86 C1238.66,570.76 1250.56,552.37 1263.35,554.86 C1278.87,557.88 1281.30,589.45 1298.74,599.63 C1309.61,605.98 1321.94,591.44 1334.13,596.19 C1350.26,602.47 1357.98,612.59 1369.52,627.19 C1386.30,648.42 1387.20,676.27 1404.91,685.74 C1415.52,691.42 1432.74,678.69 1440.30,665.08 C1461.05,627.71 1454.37,587.36 1475.69,558.30 C1482.68,548.78 1498.64,561.37 1511.08,568.63 C1526.95,577.90 1530.80,595.82 1546.47,599.63 C1559.12,602.71 1571.47,595.97 1581.86,585.86 C1599.78,568.41 1608.60,519.80 1617.25,530.74 C1636.91,555.63 1629.95,632.34 1652.64,675.41 C1658.26,686.07 1680.89,676.55 1688.03,665.08 C1709.20,631.08 1706.01,601.56 1723.42,561.74 C1734.32,536.80 1742.03,509.72 1758.81,503.19 C1770.35,498.70 1785.68,518.01 1794.20,534.19 C1813.99,571.75 1815.43,596.19 1829.59,637.52 L1829.59,713.3 L732.50,713.3 Z" fill="rgba(91,158,74,0.1)"/><path d="M732.50,492.86 C746.66,494.23 754.74,491.82 767.89,496.30 C783.05,501.46 788.59,509.82 803.28,516.97 C816.90,523.59 824.05,527.19 838.67,530.74 C852.36,534.08 867.55,523.42 874.06,534.19 C895.86,570.26 888.17,608.51 909.45,647.86 C916.48,660.86 940.81,677.44 944.84,665.08 C969.12,590.64 958.89,480.69 980.23,430.86 C987.21,414.56 1003.67,471.24 1015.62,499.74 C1031.98,538.75 1031.70,581.78 1051.01,599.63 C1060.01,607.95 1070.40,569.86 1086.40,565.19 C1098.71,561.60 1110.48,569.61 1121.79,578.97 C1138.79,593.03 1142.69,606.11 1157.18,623.74 C1171.00,640.56 1186.74,678.70 1192.57,665.08 C1215.05,612.57 1207.06,500.11 1227.96,458.41 C1235.38,443.62 1247.33,498.91 1263.35,523.86 C1275.64,542.99 1282.56,563.91 1298.74,568.63 C1310.88,572.18 1319.13,546.71 1334.13,544.52 C1347.44,542.58 1361.70,546.50 1369.52,558.30 C1390.01,589.21 1384.05,624.91 1404.91,651.30 C1412.36,660.73 1432.66,657.89 1440.30,647.86 C1460.98,620.69 1464.26,550.51 1475.69,558.30 C1492.57,569.80 1488.43,650.89 1511.08,696.08 C1516.74,707.37 1532.41,697.47 1546.47,699.52 C1560.72,701.60 1576.72,717.43 1581.86,706.41 C1605.03,656.81 1596.82,578.79 1617.25,547.97 C1625.13,536.08 1638.16,579.20 1652.64,599.63 C1666.47,619.15 1680.17,659.33 1688.03,647.86 C1708.48,618.00 1701.44,534.80 1723.42,496.30 C1729.75,485.20 1744.65,512.83 1758.81,523.86 C1772.97,534.88 1783.55,537.42 1794.20,551.41 C1811.86,574.62 1815.43,590.68 1829.59,616.86 L1829.59,713.3 L732.50,713.3 Z" fill="rgba(59,110,245,0.1)"/><path d="M732.50,627.19 C746.66,617.54 753.14,604.51 767.89,603.08 C781.45,601.76 788.87,619.60 803.28,620.30 C817.18,620.98 825.36,604.58 838.67,606.52 C853.67,608.71 861.59,619.10 874.06,630.63 C889.90,645.28 892.78,658.98 909.45,671.97 C921.09,681.03 936.43,693.93 944.84,685.74 C964.75,666.37 961.64,632.93 980.23,603.08 C989.95,587.46 999.75,576.71 1015.62,572.08 C1028.06,568.45 1036.56,580.30 1051.01,582.41 C1064.88,584.44 1075.56,575.56 1086.40,582.41 C1103.88,593.47 1107.97,609.02 1121.79,627.19 C1136.28,646.22 1140.38,668.87 1157.18,675.41 C1168.69,679.89 1182.77,667.14 1192.57,654.74 C1211.08,631.32 1210.35,610.71 1227.96,585.86 C1238.66,570.76 1250.56,552.37 1263.35,554.86 C1278.87,557.88 1281.30,589.45 1298.74,599.63 C1309.61,605.98 1321.94,591.44 1334.13,596.19 C1350.26,602.47 1357.98,612.59 1369.52,627.19 C1386.30,648.42 1387.20,676.27 1404.91,685.74 C1415.52,691.42 1432.74,678.69 1440.30,665.08 C1461.05,627.71 1454.37,587.36 1475.69,558.30 C1482.68,548.78 1498.64,561.37 1511.08,568.63 C1526.95,577.90 1530.80,595.82 1546.47,599.63 C1559.12,602.71 1571.47,595.97 1581.86,585.86 C1599.78,568.41 1608.60,519.80 1617.25,530.74 C1636.91,555.63 1629.95,632.34 1652.64,675.41 C1658.26,686.07 1680.89,676.55 1688.03,665.08 C1709.20,631.08 1706.01,601.56 1723.42,561.74 C1734.32,536.80 1742.03,509.72 1758.81,503.19 C1770.35,498.70 1785.68,518.01 1794.20,534.19 C1813.99,571.75 1815.43,596.19 1829.59,637.52" fill="none" stroke="#5b9e4a" stroke-width="2"/><circle cx="732.50" cy="627.19" r="3.2" fill="rgba(91,158,74,0.1)" stroke="#5b9e4a" stroke-width="1.6"/><circle cx="767.89" cy="603.08" r="3.2" fill="rgba(91,158,74,0.1)" stroke="#5b9e4a" stroke-width="1.6"/><circle cx="803.28" cy="620.30" r="3.2" fill="rgba(91,158,74,0.1)" stroke="#5b9e4a" stroke-width="1.6"/><circle cx="838.67" cy="606.52" r="3.2" fill="rgba(91,158,74,0.1)" stroke="#5b9e4a" stroke-width="1.6"/><circle cx="874.06" cy="630.63" r="3.2" fill="rgba(91,158,74,0.1)" stroke="#5b9e4a" stroke-width="1.6"/><circle cx="909.45" cy="671.97" r="3.2" fill="rgba(91,158,74,0.1)" stroke="#5b9e4a" stroke-width="1.6"/><circle cx="944.84" cy="685.74" r="3.2" fill="rgba(91,158,74,0.1)" stroke="#5b9e4a" stroke-width="1.6"/><circle cx="980.23" cy="603.08" r="3.2" fill="rgba(91,158,74,0.1)" stroke="#5b9e4a" stroke-width="1.6"/><circle cx="1015.62" cy="572.08" r="3.2" fill="rgba(91,158,74,0.1)" stroke="#5b9e4a" stroke-width="1.6"/><circle cx="1051.01" cy="582.41" r="3.2" fill="rgba(91,158,74,0.1)" stroke="#5b9e4a" stroke-width="1.6"/><circle cx="1086.40" cy="582.41" r="3.2" fill="rgba(91,158,74,0.1)" stroke="#5b9e4a" stroke-width="1.6"/><circle cx="1121.79" cy="627.19" r="3.2" fill="rgba(91,158,74,0.1)" stroke="#5b9e4a" stroke-width="1.6"/><circle cx="1157.18" cy="675.41" r="3.2" fill="rgba(91,158,74,0.1)" stroke="#5b9e4a" stroke-width="1.6"/><circle cx="1192.57" cy="654.74" r="3.2" fill="rgba(91,158,74,0.1)" stroke="#5b9e4a" stroke-width="1.6"/><circle cx="1227.96" cy="585.86" r="3.2" fill="rgba(91,158,74,0.1)" stroke="#5b9e4a" stroke-width="1.6"/><circle cx="1263.35" cy="554.86" r="3.2" fill="rgba(91,158,74,0.1)" stroke="#5b9e4a" stroke-width="1.6"/><circle cx="1298.74" cy="599.63" r="3.2" fill="rgba(91,158,74,0.1)" stroke="#5b9e4a" stroke-width="1.6"/><circle cx="1334.13" cy="596.19" r="3.2" fill="rgba(91,158,74,0.1)" stroke="#5b9e4a" stroke-width="1.6"/><circle cx="1369.52" cy="627.19" r="3.2" fill="rgba(91,158,74,0.1)" stroke="#5b9e4a" stroke-width="1.6"/><circle cx="1404.91" cy="685.74" r="3.2" fill="rgba(91,158,74,0.1)" stroke="#5b9e4a" stroke-width="1.6"/><circle cx="1440.30" cy="665.08" r="3.2" fill="rgba(91,158,74,0.1)" stroke="#5b9e4a" stroke-width="1.6"/><circle cx="1475.69" cy="558.30" r="3.2" fill="rgba(91,158,74,0.1)" stroke="#5b9e4a" stroke-width="1.6"/><circle cx="1511.08" cy="568.63" r="3.2" fill="rgba(91,158,74,0.1)" stroke="#5b9e4a" stroke-width="1.6"/><circle cx="1546.47" cy="599.63" r="3.2" fill="rgba(91,158,74,0.1)" stroke="#5b9e4a" stroke-width="1.6"/><circle cx="1581.86" cy="585.86" r="3.2" fill="rgba(91,158,74,0.1)" stroke="#5b9e4a" stroke-width="1.6"/><circle cx="1617.25" cy="530.74" r="3.2" fill="rgba(91,158,74,0.1)" stroke="#5b9e4a" stroke-width="1.6"/><circle cx="1652.64" cy="675.41" r="3.2" fill="rgba(91,158,74,0.1)" stroke="#5b9e4a" stroke-width="1.6"/><circle cx="1688.03" cy="665.08" r="3.2" fill="rgba(91,158,74,0.1)" stroke="#5b9e4a" stroke-width="1.6"/><circle cx="1723.42" cy="561.74" r="3.2" fill="rgba(91,158,74,0.1)" stroke="#5b9e4a" stroke-width="1.6"/><circle cx="1758.81" cy="503.19" r="3.2" fill="rgba(91,158,74,0.1)" stroke="#5b9e4a" stroke-width="1.6"/><circle cx="1794.20" cy="534.19" r="3.2" fill="rgba(91,158,74,0.1)" stroke="#5b9e4a" stroke-width="1.6"/><circle cx="1829.59" cy="637.52" r="3.2" fill="rgba(91,158,74,0.1)" stroke="#5b9e4a" stroke-width="1.6"/><path d="M732.50,492.86 C746.66,494.23 754.74,491.82 767.89,496.30 C783.05,501.46 788.59,509.82 803.28,516.97 C816.90,523.59 824.05,527.19 838.67,530.74 C852.36,534.08 867.55,523.42 874.06,534.19 C895.86,570.26 888.17,608.51 909.45,647.86 C916.48,660.86 940.81,677.44 944.84,665.08 C969.12,590.64 958.89,480.69 980.23,430.86 C987.21,414.56 1003.67,471.24 1015.62,499.74 C1031.98,538.75 1031.70,581.78 1051.01,599.63 C1060.01,607.95 1070.40,569.86 1086.40,565.19 C1098.71,561.60 1110.48,569.61 1121.79,578.97 C1138.79,593.03 1142.69,606.11 1157.18,623.74 C1171.00,640.56 1186.74,678.70 1192.57,665.08 C1215.05,612.57 1207.06,500.11 1227.96,458.41 C1235.38,443.62 1247.33,498.91 1263.35,523.86 C1275.64,542.99 1282.56,563.91 1298.74,568.63 C1310.88,572.18 1319.13,546.71 1334.13,544.52 C1347.44,542.58 1361.70,546.50 1369.52,558.30 C1390.01,589.21 1384.05,624.91 1404.91,651.30 C1412.36,660.73 1432.66,657.89 1440.30,647.86 C1460.98,620.69 1464.26,550.51 1475.69,558.30 C1492.57,569.80 1488.43,650.89 1511.08,696.08 C1516.74,707.37 1532.41,697.47 1546.47,699.52 C1560.72,701.60 1576.72,717.43 1581.86,706.41 C1605.03,656.81 1596.82,578.79 1617.25,547.97 C1625.13,536.08 1638.16,579.20 1652.64,599.63 C1666.47,619.15 1680.17,659.33 1688.03,647.86 C1708.48,618.00 1701.44,534.80 1723.42,496.30 C1729.75,485.20 1744.65,512.83 1758.81,523.86 C1772.97,534.88 1783.55,537.42 1794.20,551.41 C1811.86,574.62 1815.43,590.68 1829.59,616.86" fill="none" stroke="#3d72f5" stroke-width="2"/><circle cx="732.50" cy="492.86" r="3.2" fill="rgba(59,110,245,0.1)" stroke="#3d72f5" stroke-width="1.6"/><circle cx="767.89" cy="496.30" r="3.2" fill="rgba(59,110,245,0.1)" stroke="#3d72f5" stroke-width="1.6"/><circle cx="803.28" cy="516.97" r="3.2" fill="rgba(59,110,245,0.1)" stroke="#3d72f5" stroke-width="1.6"/><circle cx="838.67" cy="530.74" r="3.2" fill="rgba(59,110,245,0.1)" stroke="#3d72f5" stroke-width="1.6"/><circle cx="874.06" cy="534.19" r="3.2" fill="rgba(59,110,245,0.1)" stroke="#3d72f5" stroke-width="1.6"/><circle cx="909.45" cy="647.86" r="3.2" fill="rgba(59,110,245,0.1)" stroke="#3d72f5" stroke-width="1.6"/><circle cx="944.84" cy="665.08" r="3.2" fill="rgba(59,110,245,0.1)" stroke="#3d72f5" stroke-width="1.6"/><circle cx="980.23" cy="430.86" r="3.2" fill="rgba(59,110,245,0.1)" stroke="#3d72f5" stroke-width="1.6"/><circle cx="1015.62" cy="499.74" r="3.2" fill="rgba(59,110,245,0.1)" stroke="#3d72f5" stroke-width="1.6"/><circle cx="1051.01" cy="599.63" r="3.2" fill="rgba(59,110,245,0.1)" stroke="#3d72f5" stroke-width="1.6"/><circle cx="1086.40" cy="565.19" r="3.2" fill="rgba(59,110,245,0.1)" stroke="#3d72f5" stroke-width="1.6"/><circle cx="1121.79" cy="578.97" r="3.2" fill="rgba(59,110,245,0.1)" stroke="#3d72f5" stroke-width="1.6"/><circle cx="1157.18" cy="623.74" r="3.2" fill="rgba(59,110,245,0.1)" stroke="#3d72f5" stroke-width="1.6"/><circle cx="1192.57" cy="665.08" r="3.2" fill="rgba(59,110,245,0.1)" stroke="#3d72f5" stroke-width="1.6"/><circle cx="1227.96" cy="458.41" r="3.2" fill="rgba(59,110,245,0.1)" stroke="#3d72f5" stroke-width="1.6"/><circle cx="1263.35" cy="523.86" r="3.2" fill="rgba(59,110,245,0.1)" stroke="#3d72f5" stroke-width="1.6"/><circle cx="1298.74" cy="568.63" r="3.2" fill="rgba(59,110,245,0.1)" stroke="#3d72f5" stroke-width="1.6"/><circle cx="1334.13" cy="544.52" r="3.2" fill="rgba(59,110,245,0.1)" stroke="#3d72f5" stroke-width="1.6"/><circle cx="1369.52" cy="558.30" r="3.2" fill="rgba(59,110,245,0.1)" stroke="#3d72f5" stroke-width="1.6"/><circle cx="1404.91" cy="651.30" r="3.2" fill="rgba(59,110,245,0.1)" stroke="#3d72f5" stroke-width="1.6"/><circle cx="1440.30" cy="647.86" r="3.2" fill="rgba(59,110,245,0.1)" stroke="#3d72f5" stroke-width="1.6"/><circle cx="1475.69" cy="558.30" r="3.2" fill="rgba(59,110,245,0.1)" stroke="#3d72f5" stroke-width="1.6"/><circle cx="1511.08" cy="696.08" r="3.2" fill="rgba(59,110,245,0.1)" stroke="#3d72f5" stroke-width="1.6"/><circle cx="1546.47" cy="699.52" r="3.2" fill="rgba(59,110,245,0.1)" stroke="#3d72f5" stroke-width="1.6"/><circle cx="1581.86" cy="706.41" r="3.2" fill="rgba(59,110,245,0.1)" stroke="#3d72f5" stroke-width="1.6"/><circle cx="1617.25" cy="547.97" r="3.2" fill="rgba(59,110,245,0.1)" stroke="#3d72f5" stroke-width="1.6"/><circle cx="1652.64" cy="599.63" r="3.2" fill="rgba(59,110,245,0.1)" stroke="#3d72f5" stroke-width="1.6"/><circle cx="1688.03" cy="647.86" r="3.2" fill="rgba(59,110,245,0.1)" stroke="#3d72f5" stroke-width="1.6"/><circle cx="1723.42" cy="496.30" r="3.2" fill="rgba(59,110,245,0.1)" stroke="#3d72f5" stroke-width="1.6"/><circle cx="1758.81" cy="523.86" r="3.2" fill="rgba(59,110,245,0.1)" stroke="#3d72f5" stroke-width="1.6"/><circle cx="1794.20" cy="551.41" r="3.2" fill="rgba(59,110,245,0.1)" stroke="#3d72f5" stroke-width="1.6"/><circle cx="1829.59" cy="616.86" r="3.2" fill="rgba(59,110,245,0.1)" stroke="#3d72f5" stroke-width="1.6"/><text x="722.3" y="717.20" text-anchor="end" font-size="11" fill="#666">0</text><text x="722.3" y="682.76" text-anchor="end" font-size="11" fill="#666">10</text><text x="722.3" y="648.31" text-anchor="end" font-size="11" fill="#666">20</text><text x="722.3" y="613.87" text-anchor="end" font-size="11" fill="#666">30</text><text x="722.3" y="579.42" text-anchor="end" font-size="11" fill="#666">40</text><text x="722.3" y="544.98" text-anchor="end" font-size="11" fill="#666">50</text><text x="722.3" y="510.53" text-anchor="end" font-size="11" fill="#666">60</text><text x="722.3" y="476.09" text-anchor="end" font-size="11" fill="#666">70</text><text x="722.3" y="441.64" text-anchor="end" font-size="11" fill="#666">80</text><text x="722.3" y="407.20" text-anchor="end" font-size="11" fill="#666">90</text><text transform="translate(730.5,724.2) rotate(-31.5)" text-anchor="end" font-size="11" fill="#666" dy="0.7em">05 Jan</text><text transform="translate(765.9,724.2) rotate(-31.5)" text-anchor="end" font-size="11" fill="#666" dy="0.7em">06 Jan</text><text transform="translate(801.3,724.2) rotate(-31.5)" text-anchor="end" font-size="11" fill="#666" dy="0.7em">07 Jan</text><text transform="translate(836.7,724.2) rotate(-31.5)" text-anchor="end" font-size="11" fill="#666" dy="0.7em">08 Jan</text><text transform="translate(872.1,724.2) rotate(-31.5)" text-anchor="end" font-size="11" fill="#666" dy="0.7em">09 Jan</text><text transform="translate(907.5,724.2) rotate(-31.5)" text-anchor="end" font-size="11" fill="#666" dy="0.7em">10 Jan</text><text transform="translate(942.8,724.2) rotate(-31.5)" text-anchor="end" font-size="11" fill="#666" dy="0.7em">11 Jan</text><text transform="translate(978.2,724.2) rotate(-31.5)" text-anchor="end" font-size="11" fill="#666" dy="0.7em">12 Jan</text><text transform="translate(1013.6,724.2) rotate(-31.5)" text-anchor="end" font-size="11" fill="#666" dy="0.7em">13 Jan</text><text transform="translate(1049.0,724.2) rotate(-31.5)" text-anchor="end" font-size="11" fill="#666" dy="0.7em">14 Jan</text><text transform="translate(1084.4,724.2) rotate(-31.5)" text-anchor="end" font-size="11" fill="#666" dy="0.7em">15 Jan</text><text transform="translate(1119.8,724.2) rotate(-31.5)" text-anchor="end" font-size="11" fill="#666" dy="0.7em">16 Jan</text><text transform="translate(1155.2,724.2) rotate(-31.5)" text-anchor="end" font-size="11" fill="#666" dy="0.7em">17 Jan</text><text transform="translate(1190.6,724.2) rotate(-31.5)" text-anchor="end" font-size="11" fill="#666" dy="0.7em">18 Jan</text><text transform="translate(1226.0,724.2) rotate(-31.5)" text-anchor="end" font-size="11" fill="#666" dy="0.7em">19 Jan</text><text transform="translate(1261.3,724.2) rotate(-31.5)" text-anchor="end" font-size="11" fill="#666" dy="0.7em">20 Jan</text><text transform="translate(1296.7,724.2) rotate(-31.5)" text-anchor="end" font-size="11" fill="#666" dy="0.7em">21 Jan</text><text transform="translate(1332.1,724.2) rotate(-31.5)" text-anchor="end" font-size="11" fill="#666" dy="0.7em">22 Jan</text><text transform="translate(1367.5,724.2) rotate(-31.5)" text-anchor="end" font-size="11" fill="#666" dy="0.7em">23 Jan</text><text transform="translate(1402.9,724.2) rotate(-31.5)" text-anchor="end" font-size="11" fill="#666" dy="0.7em">24 Jan</text><text transform="translate(1438.3,724.2) rotate(-31.5)" text-anchor="end" font-size="11" fill="#666" dy="0.7em">25 Jan</text><text transform="translate(1473.7,724.2) rotate(-31.5)" text-anchor="end" font-size="11" fill="#666" dy="0.7em">26 Jan</text><text transform="translate(1509.1,724.2) rotate(-31.5)" text-anchor="end" font-size="11" fill="#666" dy="0.7em">27 Jan</text><text transform="translate(1544.5,724.2) rotate(-31.5)" text-anchor="end" font-size="11" fill="#666" dy="0.7em">28 Jan</text><text transform="translate(1579.9,724.2) rotate(-31.5)" text-anchor="end" font-size="11" fill="#666" dy="0.7em">29 Jan</text><text transform="translate(1615.2,724.2) rotate(-31.5)" text-anchor="end" font-size="11" fill="#666" dy="0.7em">30 Jan</text><text transform="translate(1650.6,724.2) rotate(-31.5)" text-anchor="end" font-size="11" fill="#666" dy="0.7em">31 Jan</text><text transform="translate(1686.0,724.2) rotate(-31.5)" text-anchor="end" font-size="11" fill="#666" dy="0.7em">01 Feb</text><text transform="translate(1721.4,724.2) rotate(-31.5)" text-anchor="end" font-size="11" fill="#666" dy="0.7em">02 Feb</text><text transform="translate(1756.8,724.2) rotate(-31.5)" text-anchor="end" font-size="11" fill="#666" dy="0.7em">03 Feb</text><text transform="translate(1792.2,724.2) rotate(-31.5)" text-anchor="end" font-size="11" fill="#666" dy="0.7em">04 Feb</text><text transform="translate(1827.6,724.2) rotate(-31.5)" text-anchor="end" font-size="11" fill="#666" dy="0.7em">05 Feb</text><rect x="1173.7" y="384.1" width="36" height="10.4" fill="rgba(59,110,245,0.1)" stroke="#3d72f5" stroke-width="2"/><text x="1215.6" y="392" font-size="11" fill="#666">Meta Ads</text><rect x="1270" y="384.1" width="36" height="10.4" fill="rgba(91,158,74,0.1)" stroke="#5b9e4a" stroke-width="2"/><text x="1311.1" y="392" font-size="11" fill="#666">Google Ads</text></svg><svg style="position:absolute;left:305px;top:807.2px" width="16" height="15"><path d="M1,14 H15 M1.8,14 V7 H5.2 V14 M5.2,14 V1.5 H9.8 V14 M9.8,14 V5 H13.8 V14" fill="none" stroke="#4a5568" stroke-width="1.5" stroke-linejoin="round"/></svg><div style="position:absolute;left:331.70px;top:808.80px;font-size:13.47px;line-height:13.47px;color:#4d596b;font-weight:bold;white-space:nowrap;">Relatório de Campanhas</div><div style="position:absolute;left:305px;top:839px;width:1534px;height:37px;background:#e5e8ee;border:1px solid #c9ced6;box-sizing:border-box;"></div><div style="position:absolute;left:305px;top:876px;width:1534px;height:20px;border-left:1px solid #c9ced6;border-right:1px solid #c9ced6;box-sizing:border-box;"></div><div style="position:absolute;left:641px;top:839px;width:1px;height:60px;background:#c9ced6;"></div><div style="position:absolute;left:882px;top:839px;width:1px;height:60px;background:#c9ced6;"></div><div style="position:absolute;left:1646px;top:839px;width:1px;height:60px;background:#c9ced6;"></div><div style="position:absolute;left:348.60px;top:850.93px;font-size:11.3px;line-height:11.3px;color:#525e6e;font-weight:bold;white-space:nowrap;letter-spacing:0.55px">GA CAMPAIGNID / FB SOURCEID</div><div style="position:absolute;left:688.00px;top:850.93px;font-size:11.3px;line-height:11.3px;color:#525e6e;font-weight:bold;white-space:nowrap;letter-spacing:0.55px">FONTE</div><div style="position:absolute;left:929.50px;top:850.93px;font-size:11.3px;line-height:11.3px;color:#525e6e;font-weight:bold;white-space:nowrap;letter-spacing:0.55px">UTMS</div><div style="position:absolute;right:62.40px;top:850.93px;font-size:11.3px;line-height:11.3px;color:#525e6e;font-weight:bold;white-space:nowrap;letter-spacing:0.55px">QUANTIDADE</div><svg style="position:absolute;left:329px;top:851px" width="14" height="12"><path d="M4.5,0.8 L3,11.2 M10,0.8 L8.5,11.2 M1,4 H13 M0.5,8 H12.5" stroke="#525e6e" stroke-width="1.8" fill="none"/></svg><svg style="position:absolute;left:664.5px;top:849px" width="14" height="14"><circle cx="7" cy="7" r="6" fill="none" stroke="#525e6e" stroke-width="1.5"/><circle cx="7" cy="7" r="3.4" fill="none" stroke="#525e6e" stroke-width="1.4"/><circle cx="7" cy="7" r="1.2" fill="#525e6e"/></svg><svg style="position:absolute;left:906px;top:849px" width="14" height="14"><circle cx="7" cy="7" r="6" fill="none" stroke="#525e6e" stroke-width="1.5"/><circle cx="7" cy="7" r="3.4" fill="none" stroke="#525e6e" stroke-width="1.4"/><circle cx="7" cy="7" r="1.2" fill="#525e6e"/></svg><svg style="position:absolute;left:1715px;top:850px" width="14" height="14"><rect x="1" y="1" width="12" height="12" rx="1.5" fill="none" stroke="#525e6e" stroke-width="1.6"/><path d="M4,9 L6,6 L8,8 L10,5" fill="none" stroke="#525e6e" stroke-width="1.3"/></svg><div style="position:absolute;left:663px;top:885px;width:123px;height:10px;background:#e2e5f7;border-radius:4px;"></div><div style="position:absolute;left:906px;top:887px;width:174px;height:10px;background:#dcf0f4;border-radius:4px;"></div>
</body></html>
